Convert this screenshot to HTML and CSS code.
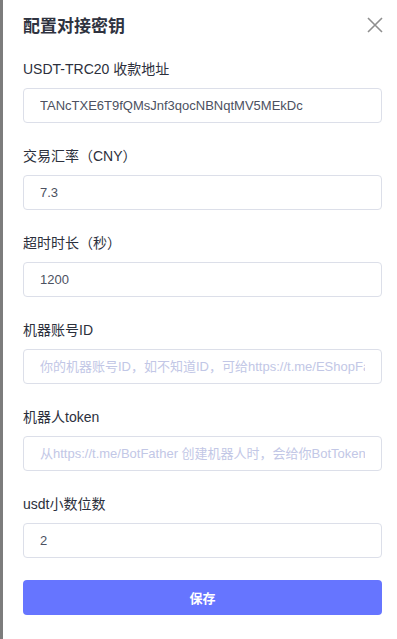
FILE: index.html
```html
<!DOCTYPE html>
<html lang="zh-CN">
<head>
<meta charset="utf-8">
<title>配置对接密钥</title>
<link rel="stylesheet" href="styles.css">
</head>
<body>
<div class="dialog">
  <div class="header">
    <h1 class="title">配置对接密钥</h1>
    <span class="close" aria-label="关闭">
      <svg width="16" height="16" viewBox="0 0 16 16"><path d="M1 1 L15 15 M15 1 L1 15" stroke="#8f8f8f" stroke-width="1.6" fill="none"/></svg>
    </span>
  </div>
  <form class="form">
    <div class="field">
      <label class="label">USDT-TRC20 收款地址</label>
      <input class="input" type="text" value="TANcTXE6T9fQMsJnf3qocNBNqtMV5MEkDc">
    </div>
    <div class="field">
      <label class="label">交易汇率（CNY）</label>
      <input class="input" type="text" value="7.3">
    </div>
    <div class="field">
      <label class="label">超时时长（秒）</label>
      <input class="input" type="text" value="1200">
    </div>
    <div class="field">
      <label class="label">机器账号ID</label>
      <input class="input" type="text" placeholder="你的机器账号ID，如不知道ID，可给https://t.me/EShopFakaBot 发送消息获取">
    </div>
    <div class="field">
      <label class="label">机器人token</label>
      <input class="input" type="text" placeholder="从https://t.me/BotFather 创建机器人时，会给你BotToken">
    </div>
    <div class="field">
      <label class="label">usdt小数位数</label>
      <input class="input" type="text" value="2">
    </div>
    <button class="save" type="button">保存</button>
  </form>
</div>
</body>
</html>
```

FILE: styles.css
```css
html, body {
  margin: 0;
  padding: 0;
  background: #ffffff;
}
body {
  font-family: "Liberation Sans", "Noto Sans CJK SC", sans-serif;
  border-left: 3px solid #7c7c7c;
  min-height: 639px;
  box-sizing: border-box;
}
.dialog {
  padding: 0 15px 0 20px;
}
.header {
  display: flex;
  align-items: center;
  justify-content: space-between;
  height: 50px;
}
.title {
  margin: 0;
  font-size: 17px;
  font-weight: 700;
  color: #2f3340;
  font-family: "Noto Sans CJK SC", sans-serif;
  line-height: 24px;
}
.close {
  display: flex;
  width: 16px;
  height: 16px;
  margin-right: -1px;
}
.form {
  display: flex;
  flex-direction: column;
}
.field {
  display: flex;
  flex-direction: column;
  margin-top: 9px;
}
.field + .field {
  margin-top: 23px;
}
.label {
  font-family: "Liberation Sans", "Noto Sans CJK SC", sans-serif;
  font-size: 14px;
  line-height: 20px;
  color: #2c303c;
  font-weight: 400;
  margin-bottom: 9px;
}
.input {
  box-sizing: border-box;
  height: 35px;
  width: 100%;
  border: 1px solid #dcdfe9;
  border-radius: 4px;
  padding: 0 16px;
  font-family: "Liberation Sans", "Noto Sans CJK SC", sans-serif;
  font-size: 13px;
  color: #4c5161;
  background: #fff;
  outline: none;
}
.input::placeholder {
  color: #c2c7e6;
}
.save {
  margin-top: 22px;
  height: 35px;
  border: none;
  border-radius: 4px;
  background: #6675ff;
  color: #fff;
  font-family: "Noto Sans CJK SC", sans-serif;
  font-size: 13px;
  font-weight: 700;
}
```
